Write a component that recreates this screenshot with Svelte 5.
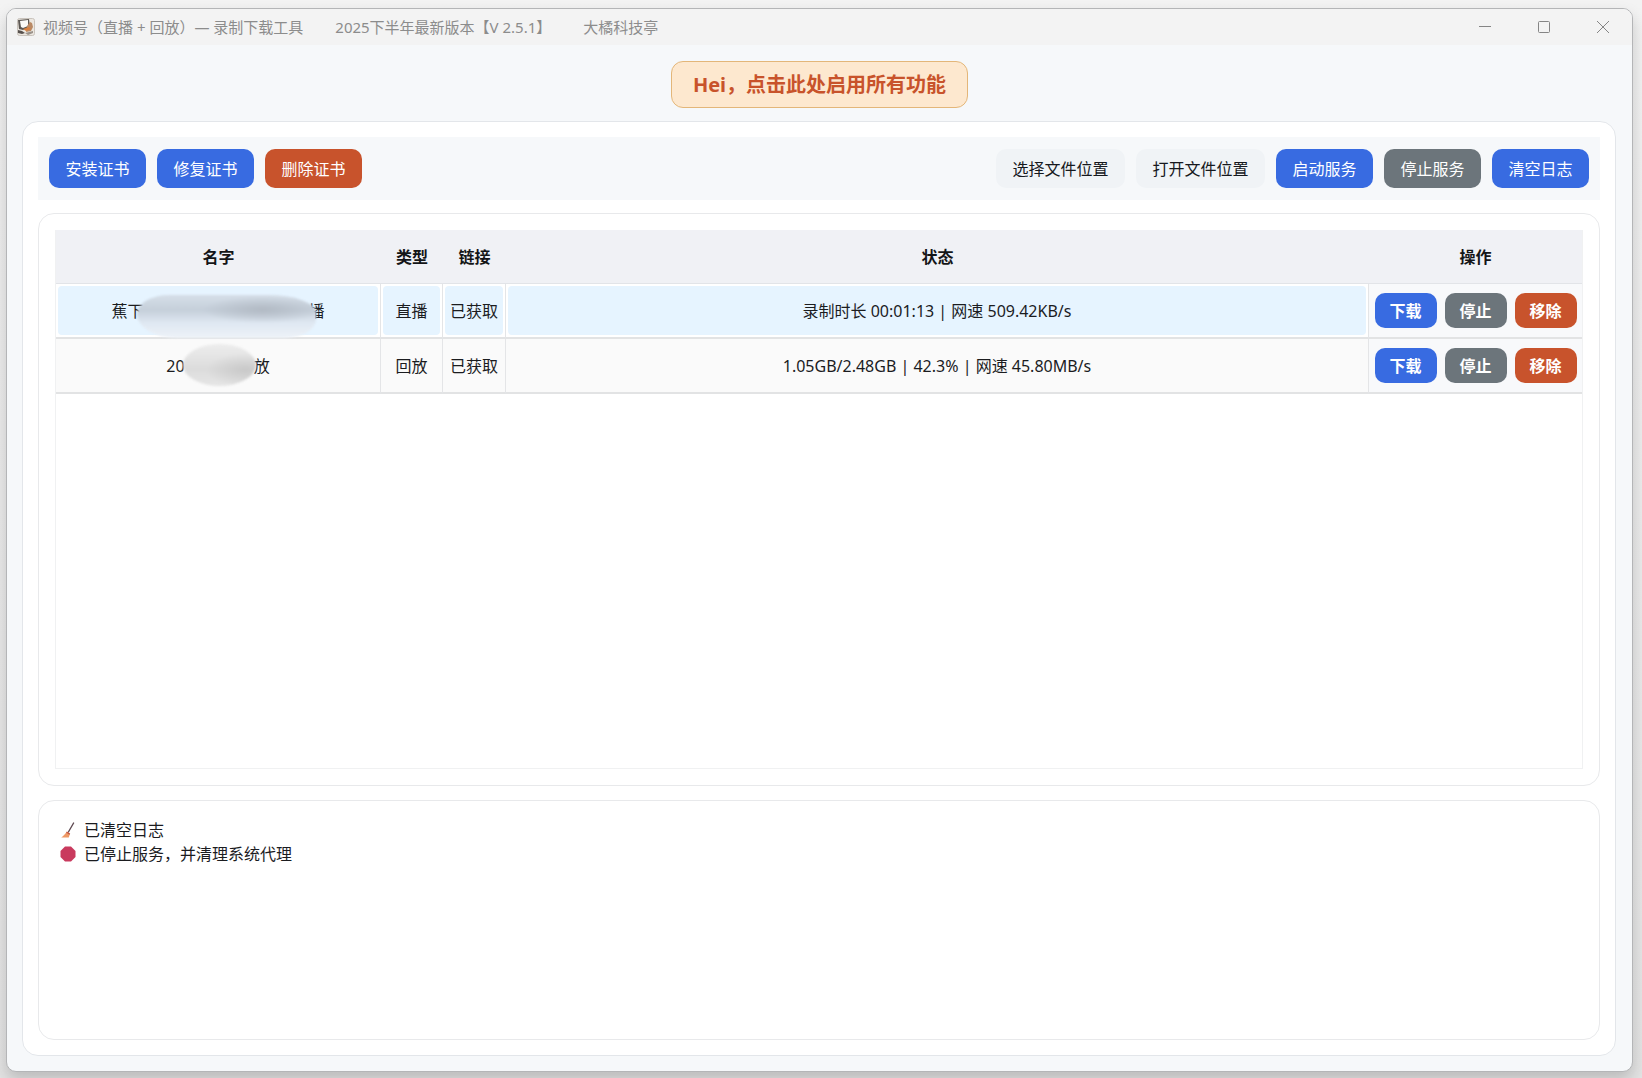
<script>
  let tasks = $state([
    {
      id: 1,
      head: '蕉下',
      tail: '播',
      mask: 'long',
      type: '直播',
      link: '已获取',
      status: '录制时长 00:01:13 | 网速 509.42KB/s',
    },
    {
      id: 2,
      head: '20',
      tail: '放',
      mask: 'short',
      type: '回放',
      link: '已获取',
      status: '1.05GB/2.48GB | 42.3% | 网速 45.80MB/s',
    },
  ]);
  let selected = $state(1);
  let logs = $state([
    { icon: 'broom', text: '已清空日志' },
    { icon: 'stop', text: '已停止服务，并清理系统代理' },
  ]);

  function removeTask(id) {
    tasks = tasks.filter((t) => t.id !== id);
  }

  function clearLogs() {
    logs = [{ icon: 'broom', text: '已清空日志' }];
  }

  function stopService() {
    logs.push({ icon: 'stop', text: '已停止服务，并清理系统代理' });
  }
</script>

<div class="desktop">
  <div class="window">
    <header class="titlebar">
      <svg class="app-icon" viewBox="0 0 18 18" aria-hidden="true">
        <rect x="0.5" y="0.5" width="17" height="17" rx="2" fill="#ece7e0" stroke="#c9c3bc" />
        <path d="M1 2l11-1 1 8-7 3-4-1z" fill="#5d5853" />
        <path d="M3 3l8-1v6l-5 2-2-1z" fill="#fbfaf7" />
        <path d="M10 8l3-4 2 1 1 4-2 4-5 1z" fill="#b98a66" />
        <path d="M6 11l6-2 2 2-5 2z" fill="#d9803f" />
        <path d="M1 12l4 1 3 2-3 1-4-1z" fill="#57514d" />
        <path d="M8 15l8-2v2l-5 2z" fill="#9a928a" />
      </svg>
      <div class="titles">
        <span>视频号（直播 + 回放）— 录制下载工具</span>
        <span>2025下半年最新版本【V 2.5.1】</span>
        <span>大橘科技亭</span>
      </div>
      <div class="controls">
        <button aria-label="最小化">
          <svg viewBox="0 0 14 14"><path d="M1 6.5h12" /></svg>
        </button>
        <button aria-label="最大化">
          <svg viewBox="0 0 14 14"><rect x="1.5" y="1.5" width="11" height="11" rx="1" /></svg>
        </button>
        <button aria-label="关闭">
          <svg viewBox="0 0 14 14"><path d="M1 1l12 12M13 1L1 13" /></svg>
        </button>
      </div>
    </header>

    <div class="notice">
      <button class="enable">Hei，点击此处启用所有功能</button>
    </div>

    <main class="card">
      <div class="toolbar">
        <div class="group">
          <button class="btn blue">安装证书</button>
          <button class="btn blue">修复证书</button>
          <button class="btn red">删除证书</button>
        </div>
        <div class="group">
          <button class="btn plain">选择文件位置</button>
          <button class="btn plain">打开文件位置</button>
          <button class="btn blue">启动服务</button>
          <button class="btn gray" onclick={stopService}>停止服务</button>
          <button class="btn blue" onclick={clearLogs}>清空日志</button>
        </div>
      </div>

      <section class="panel tasks">
        <div class="table-wrap">
          <table>
            <colgroup>
              <col class="c-name" />
              <col class="c-type" />
              <col class="c-link" />
              <col />
              <col class="c-ops" />
            </colgroup>
            <thead>
              <tr>
                <th>名字</th>
                <th>类型</th>
                <th>链接</th>
                <th>状态</th>
                <th>操作</th>
              </tr>
            </thead>
            <tbody>
              {#each tasks as task (task.id)}
                <tr class:selected={selected === task.id} onclick={() => (selected = task.id)}>
                  <td>
                    <div class="cell">
                      <span>{task.head}</span><span class="mask {task.mask}"></span><span>{task.tail}</span>
                    </div>
                  </td>
                  <td><div class="cell">{task.type}</div></td>
                  <td><div class="cell">{task.link}</div></td>
                  <td><div class="cell">{task.status}</div></td>
                  <td>
                    <div class="ops">
                      <button class="small blue">下载</button>
                      <button class="small gray">停止</button>
                      <button class="small red" onclick={() => removeTask(task.id)}>移除</button>
                    </div>
                  </td>
                </tr>
              {/each}
            </tbody>
          </table>
        </div>
      </section>

      <section class="panel logs">
        {#each logs as log}
          <p>
            {#if log.icon === 'broom'}
              <svg viewBox="0 0 16 16" aria-hidden="true">
                <path d="M13.6 1L8.4 10" stroke="#5f4a52" stroke-width="1.4" stroke-linecap="round" />
                <path d="M6.2 10.4l3.600 1.800-1 3.300H1.200c2-1.400 3.400-2.900 5-5.100z" fill="#ee9a66" />
                <path d="M6.800 9.600l3.400 2-.6 1.200L6 10.800z" fill="#c9563c" />
              </svg>
            {:else}
              <svg viewBox="0 0 16 16" aria-hidden="true">
                <path d="M5 0.500h6L15.500 5v6L11 15.500H5L0.500 11V5z" fill="#c93a5e" />
              </svg>
            {/if}
            <span>{log.text}</span>
          </p>
        {/each}
      </section>
    </main>
  </div>
</div>

<style>
  :global(body) {
    margin: 0;
  }
  .desktop {
    box-sizing: border-box;
    min-height: 100vh;
    padding: 8px 9px 6px 6px;
    display: flex;
    overflow: hidden;
    background: linear-gradient(#f3f3f3, #e4e4e4);
    font-family: "Noto Sans", "Noto Sans CJK SC", sans-serif;
    font-size: 16px;
    line-height: 24px;
    color: #1b1c1f;
  }
  button {
    font: inherit;
    border: none;
    margin: 0;
    cursor: pointer;
    white-space: nowrap;
  }
  .window {
    flex: 1;
    min-width: 0;
    display: flex;
    flex-direction: column;
    border: 1px solid #b4b5b7;
    border-radius: 10px;
    background: #f6f8fa;
    box-shadow: 0 8px 16px rgba(0, 0, 0, 0.18);
    overflow: hidden;
  }

  .titlebar {
    display: flex;
    align-items: center;
    height: 36px;
    padding-left: 10px;
    background: #f3f3f3;
    color: #8c8c8c;
    font-size: 15px;
    line-height: 20px;
  }
  .app-icon {
    width: 18px;
    height: 18px;
    margin-right: 8px;
  }
  .titles {
    flex: 1;
    display: flex;
    gap: 32px;
    white-space: nowrap;
  }
  .controls {
    display: flex;
  }
  .controls button {
    width: 59px;
    height: 36px;
    padding: 0;
    background: none;
    display: flex;
    align-items: center;
    justify-content: center;
  }
  .controls svg {
    width: 14px;
    height: 14px;
    fill: none;
    stroke: #858585;
  }

  .notice {
    display: flex;
    justify-content: center;
    padding: 16px 0 13px;
  }
  .enable {
    height: 47px;
    padding: 0 21px;
    border: 1px solid #e3b679;
    border-radius: 12px;
    background: #fde8cf;
    color: #c8532b;
    font-size: 20px;
    font-weight: 700;
  }

  .card {
    flex: 1;
    display: flex;
    flex-direction: column;
    margin: 0 16px 15px 15px;
    padding: 15px;
    border: 1px solid #e3e6ea;
    border-radius: 16px;
    background: #fff;
  }
  .toolbar {
    display: flex;
    justify-content: space-between;
    gap: 16px;
    padding: 12px 11px;
    margin-bottom: 13px;
    background: #f6f8fa;
  }
  .group {
    display: flex;
    gap: 11px;
  }
  .btn {
    min-width: 97px;
    height: 39px;
    padding: 0 16px;
    border-radius: 10px;
    color: #fff;
  }
  .blue {
    background: #386be1;
  }
  .red {
    background: #c8532c;
  }
  .gray {
    background: #6c757b;
  }
  .plain {
    min-width: 129px;
    background: #f0f3f6;
    color: #16181d;
  }

  .panel {
    box-sizing: border-box;
    border: 1px solid #e8e9eb;
    border-radius: 16px;
    background: #fff;
  }
  .tasks {
    flex: 1;
    display: flex;
    padding: 16px;
    margin-bottom: 14px;
  }
  .table-wrap {
    flex: 1;
    border: 1px solid #f0f1f2;
    border-top: none;
  }
  table {
    width: 100%;
    table-layout: fixed;
    border-collapse: separate;
    border-spacing: 0;
    text-align: center;
  }
  .c-name {
    width: 325px;
  }
  .c-type {
    width: 62px;
  }
  .c-link {
    width: 63px;
  }
  .c-ops {
    width: 213px;
  }
  th {
    height: 53px;
    padding: 0;
    background: #f0f1f5;
    border-bottom: 1px solid #e2e4e8;
    font-weight: 700;
    color: #141517;
  }
  td {
    height: 53px;
    padding: 0;
    border-right: 1px solid #e4e5e7;
    border-bottom: 2px solid #e2e3e4;
    background: #fafafa;
  }
  td:last-child {
    border-right: none;
    background: #f8f9fb;
  }
  .selected td:not(:last-child) {
    background: #fff;
  }
  .cell {
    display: flex;
    align-items: center;
    justify-content: center;
    height: 49px;
    margin: 2px;
    border-radius: 4px;
    white-space: pre;
  }
  .selected .cell {
    background: #e6f4ff;
  }
  .ops {
    display: flex;
    justify-content: center;
    gap: 8px;
  }
  .small {
    width: 62px;
    height: 35px;
    padding: 0;
    border-radius: 10px;
    color: #fff;
    font-weight: 700;
  }

  /* soft blot that hides the middle of a private name */
  .mask {
    position: relative;
    align-self: stretch;
  }
  .mask::before {
    content: "";
    position: absolute;
    filter: blur(1px);
  }
  .long {
    width: 165px;
  }
  .long::before {
    inset: 9px -7px -3px;
    border-radius: 40px 60px 40px 50px / 24px 22px 24px 30px;
    background:
      radial-gradient(ellipse at 70% 34%, rgba(176, 184, 194, 0.9), transparent 34%),
      linear-gradient(#d6dfe9, #c5cfda 35%, #dfe8f2 65%, #eef2f8);
  }
  .short {
    width: 69px;
  }
  .short::before {
    inset: 3px -2px 4px;
    border-radius: 50%;
    background:
      radial-gradient(ellipse at 85% 62%, rgba(196, 196, 196, 0.8), transparent 45%),
      linear-gradient(#ededed, #dcdcdc 60%, #e6e6e6);
  }

  .logs {
    min-height: 240px;
    padding: 17px 21px;
  }
  .logs p {
    display: flex;
    align-items: center;
    gap: 8px;
    margin: 0;
  }
  .logs svg {
    width: 16px;
    height: 16px;
    fill: none;
  }
</style>
